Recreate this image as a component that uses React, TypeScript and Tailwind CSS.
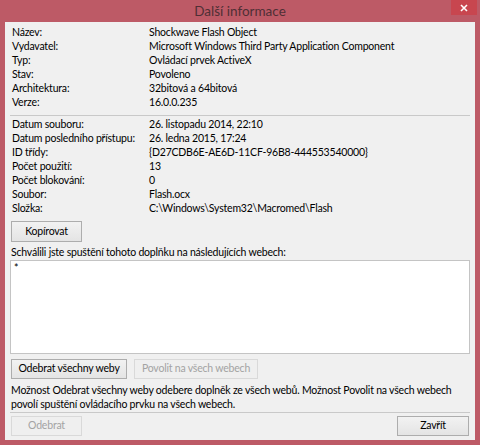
import React from 'react';

const general: [string, string][] = [
  ['Název:', 'Shockwave Flash Object'],
  ['Vydavatel:', 'Microsoft Windows Third Party Application Component'],
  ['Typ:', 'Ovládací prvek ActiveX'],
  ['Stav:', 'Povoleno'],
  ['Architektura:', '32bitová a 64bitová'],
  ['Verze:', '16.0.0.235'],
];

const details: [string, string][] = [
  ['Datum souboru:', '26. listopadu 2014, 22:10'],
  ['Datum posledního přístupu:', '26. ledna 2015, 17:24'],
  ['ID třídy:', '{D27CDB6E-AE6D-11CF-96B8-444553540000}'],
  ['Počet použití:', '13'],
  ['Počet blokování:', '0'],
  ['Soubor:', 'Flash.ocx'],
  ['Složka:', 'C:\\Windows\\System32\\Macromed\\Flash'],
];

function InfoRows({ rows }: { rows: [string, string][] }) {
  return (
    <div className="flex flex-col">
      {rows.map(([label, value]) => (
        <div key={label} className="flex h-[14px] items-center pl-[7px]">
          <span className="w-[137px] shrink-0 whitespace-nowrap">{label}</span>
          <span className="whitespace-nowrap">{value}</span>
        </div>
      ))}
    </div>
  );
}

function Button({
  children,
  width,
  height = 'h-[20px]',
  disabled,
}: {
  children: React.ReactNode;
  width: string;
  height?: string;
  disabled?: boolean;
}) {
  return (
    <div
      className={`flex items-center justify-center whitespace-nowrap border ${width} ${height} ${
        disabled
          ? 'border-[#d9d9d9] bg-[#efefef] text-[#a3a3a3]'
          : 'border-[#adadad] bg-gradient-to-b from-[#f2f2f2] to-[#e4e4e4] text-black'
      }`}
    >
      {children}
    </div>
  );
}

export default function App() {
  return (
    <div
      className="flex h-[445px] w-[480px] flex-col bg-[#bd5a66] text-[10.5px] tracking-[-0.2px] text-black"
      style={{ fontFamily: 'Lato, "Liberation Sans", sans-serif' }}
    >
      {/* Title bar */}
      <div className="relative flex h-[22px] shrink-0 items-center justify-center">
        <span className="text-[13.5px] tracking-normal text-[#4f2f35]">Další informace</span>
        <div className="absolute right-[3px] top-0 flex h-[15px] w-[26px] items-center justify-center bg-[#c8464f]">
          <svg width="8" height="8" viewBox="0 0 8 8">
            <path d="M1 1 L7 7 M7 1 L1 7" stroke="#fff" strokeWidth="1.6" />
          </svg>
        </div>
      </div>

      {/* Content */}
      <div className="mx-[5px] mb-[5px] flex flex-1 flex-col bg-[#f0f0f0]">
        <div className="pt-[4px]">
          <InfoRows rows={general} />
        </div>
        <div className="mx-[5px] mt-[5px] h-px bg-[#c9c9c9]" />
        <div className="mt-[2px]">
          <InfoRows rows={details} />
        </div>

        <div className="ml-[6px] mt-[5px]">
          <Button width="w-[71px]" height="h-[21px]">
            Kopírovat
          </Button>
        </div>

        <div className="mt-[4px] flex h-[14px] items-center whitespace-nowrap pl-[6px]">
          Schválili jste spuštění tohoto doplňku na následujících webech:
        </div>
        <div className="mx-[5px] h-[94px] border border-[#c4c4c4] bg-white pl-[3px] leading-[14px]">
          *
        </div>

        <div className="ml-[6px] mt-[5px] flex gap-[7px]">
          <Button width="w-[116px]">Odebrat všechny weby</Button>
          <Button width="w-[124px]" disabled>
            Povolit na všech webech
          </Button>
        </div>

        <div className="mt-[4px] whitespace-nowrap pl-[6px] leading-[14px]">
          Možnost Odebrat všechny weby odebere doplněk ze všech webů. Možnost Povolit na všech webech
          <br />
          povolí spuštění ovládacího prvku na všech webech.
        </div>
        <div className="mx-[5px] mt-[1px] h-px bg-[#c9c9c9]" />

        <div className="mx-[6px] mt-[3px] flex justify-between">
          <Button width="w-[71px]" disabled>
            Odebrat
          </Button>
          <Button width="w-[72px]">Zavřít</Button>
        </div>
      </div>
    </div>
  );
}
